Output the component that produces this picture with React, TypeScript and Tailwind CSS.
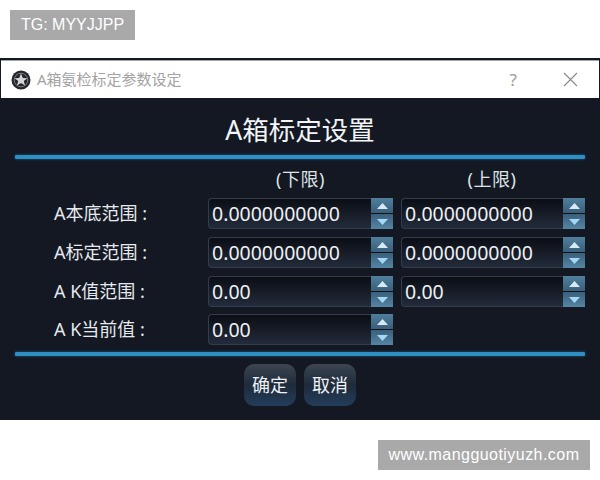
import React from 'react';

const FONT = "font-['Noto_Sans','Noto_Sans_CJK_SC',sans-serif]";
const LATIN = "font-['Liberation_Sans',sans-serif]";

// ============================================
// Spin box
// ============================================

const SpinBox: React.FC<{ value: string; className?: string }> = ({ value, className = '' }) => (
  <div className={`flex h-[31px] ${className}`}>
    <div className="flex-1 min-w-0 flex items-center pl-[3px] rounded-l-[4px] border border-r-0 border-[#343c4a] bg-gradient-to-b from-[#0b0e15] to-[#232b3b] text-[19.5px] text-[#eef1f4]">
      {value}
    </div>
    <div className="w-[22px] flex flex-col gap-[1px] bg-[#0d1219]">
      <div className="flex-1 flex items-center justify-center bg-gradient-to-b from-[#4f7f9b] to-[#3a5f7a]">
        <svg width="11" height="6" viewBox="0 0 11 6">
          <path d="M5.5 0 L11 6 H0 Z" fill="#d5e9f6" />
        </svg>
      </div>
      <div className="flex-1 flex items-center justify-center bg-gradient-to-b from-[#3a5f7a] to-[#5486a3]">
        <svg width="11" height="6" viewBox="0 0 11 6">
          <path d="M0 0 H11 L5.5 6 Z" fill="#a5d8f4" />
        </svg>
      </div>
    </div>
  </div>
);

const Divider: React.FC<{ className?: string }> = ({ className = '' }) => (
  <div className={`h-[4px] rounded-[1px] bg-[#2f8fc4] shadow-[0_0_3px_#1d5f86] ${className}`} />
);

const DialogButton: React.FC<{ label: string }> = ({ label }) => (
  <button
    type="button"
    className="w-[52px] h-[42px] rounded-[10px] bg-gradient-to-b from-[#3d4650] via-[#1e2b3c] to-[#233d5a] text-[18px] text-[#eef1f4]"
  >
    {label}
  </button>
);

// ============================================
// Form rows
// ============================================

const LONG = '0.0000000000';
const SHORT = '0.00';

const rows = [
  { label: 'A本底范围 :', low: LONG, high: LONG, gap: 'mb-[8px]' },
  { label: 'A标定范围 :', low: LONG, high: LONG, gap: 'mb-[8px]' },
  { label: 'A K值范围 :', low: SHORT, high: SHORT, gap: 'mb-[7px]' },
  { label: 'A K当前值 :', low: SHORT, high: null, gap: '' },
];

export default function App() {
  return (
    <div className={`${FONT} w-[600px] h-[480px] bg-white flex flex-col overflow-hidden`}>
      <div className="h-[58px] pt-[10px] pl-[10px] shrink-0">
        <div className={`${LATIN} w-[125px] h-[30px] bg-[#a9a9a9] flex items-center justify-center text-[16px] text-white`}>
          TG: MYYJJPP
        </div>
      </div>

      <div className="h-[362px] shrink-0 flex flex-col bg-[#131822]">
        {/* Title bar */}
        <div className="mt-[2px] mx-[1px] h-[38px] shrink-0 bg-white flex items-center border-t border-[#9fa3aa]">
          <svg width="20" height="20" viewBox="0 0 20 20" className="ml-[10px]">
            <circle cx="10" cy="10" r="9.5" fill="#23262b" />
            <circle cx="10" cy="10" r="6.8" fill="none" stroke="#7b7f85" strokeWidth="1" />
            <path
              d="M10 3.6 L11.8 8 L16.4 8.2 L12.8 11.1 L14 15.6 L10 13.1 L6 15.6 L7.2 11.1 L3.6 8.2 L8.2 8 Z"
              fill="#d4d6d8"
            />
          </svg>
          <span className="ml-[6px] text-[15px] text-[#a3a3a3]">A箱氨检标定参数设定</span>
          <span className="ml-auto text-[17px] text-[#9a9a9a]">?</span>
          <svg width="15" height="15" viewBox="0 0 15 15" className="ml-[46px] mr-[21px]">
            <path d="M1 1 L14 14 M14 1 L1 14" stroke="#8a8a8a" strokeWidth="1.1" />
          </svg>
        </div>

        {/* Body */}
        <div className="flex-1 flex flex-col px-[15px]">
          <h1 className="h-[57px] pt-[12px] text-center text-[26.5px] leading-[40px] text-[#f2f4f6]">
            A箱标定设置
          </h1>
          <Divider />

          <div className="grid grid-cols-[185px_185px_184px] gap-x-[8px] mt-[6px] text-[#e6e9ed] text-[18px]">
            <div />
            <div className="h-[33px] text-center leading-[29px] text-[#dfe3e8] tracking-[0.5px]">(下限)</div>
            <div className="h-[33px] text-center leading-[29px] text-[#dfe3e8] tracking-[0.5px] pr-[2px]">(上限)</div>
            {rows.map((row) => (
              <React.Fragment key={row.label}>
                <div className={`pl-[39px] flex items-center whitespace-pre ${row.gap}`}>{row.label}</div>
                <SpinBox value={row.low} className={row.gap} />
                {row.high ? <SpinBox value={row.high} className={row.gap} /> : <div />}
              </React.Fragment>
            ))}
          </div>

          <Divider className="mt-[7px]" />

          <div className="flex justify-center gap-[8px] mt-[8px]">
            <DialogButton label="确定" />
            <DialogButton label="取消" />
          </div>
        </div>
      </div>

      <div className="flex justify-end pt-[20px] pr-[10px]">
        <div className={`${LATIN} w-[212px] h-[30px] bg-[#a9a9a9] flex items-center justify-center text-[16px] tracking-[0.45px] text-white`}>
          www.mangguotiyuzh.com
        </div>
      </div>
    </div>
  );
}
